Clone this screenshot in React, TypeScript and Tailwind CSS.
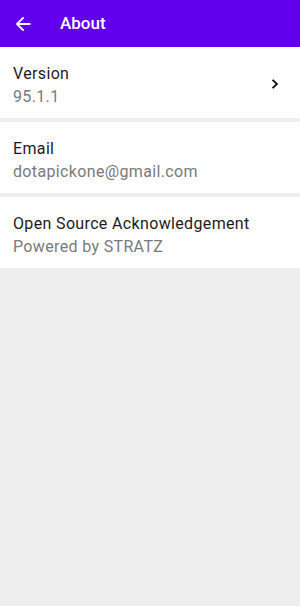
const font = { fontFamily: "Roboto, 'Noto Sans', sans-serif" };

interface RowProps {
  title: string;
  subtitle: string;
  chevron?: boolean;
}

function Row({ title, subtitle, chevron }: RowProps) {
  return (
    <div className="flex items-center bg-white pl-[13px] pr-[20px] pt-[15px] pb-[10px]">
      <div className="flex-1 tracking-[0.35px]">
        <div className="text-[16px] leading-[23px] text-[#1c1c1c]">{title}</div>
        <div className="text-[16px] leading-[23px] text-[#7a7a7a]">{subtitle}</div>
      </div>
      {chevron && (
        <svg width="10" height="12" viewBox="0 0 10 12" className="mb-[2px]">
          <path d="M2.5 1.8 L7 6 L2.5 10.2" fill="none" stroke="#111" strokeWidth="1.8" />
        </svg>
      )}
    </div>
  );
}

export default function App() {
  return (
    <div className="flex h-[606px] w-[300px] flex-col bg-[#eeeeee]" style={font}>
      <div className="flex h-[47px] items-center bg-[#6200ee] text-white">
        <svg width="22" height="22" viewBox="0 0 24 24" className="ml-[12px]">
          <path d="M20 11H7.83l5.59-5.59L12 4l-8 8 8 8 1.41-1.41L7.83 13H20v-2z" fill="white" />
        </svg>
        <span className="ml-[26px] text-[17px] font-medium">About</span>
      </div>
      <div className="flex flex-col gap-[4px]">
        <Row title="Version" subtitle="95.1.1" chevron />
        <Row title="Email" subtitle="dotapickone@gmail.com" />
        <Row title="Open Source Acknowledgement" subtitle="Powered by STRATZ" />
      </div>
    </div>
  );
}
